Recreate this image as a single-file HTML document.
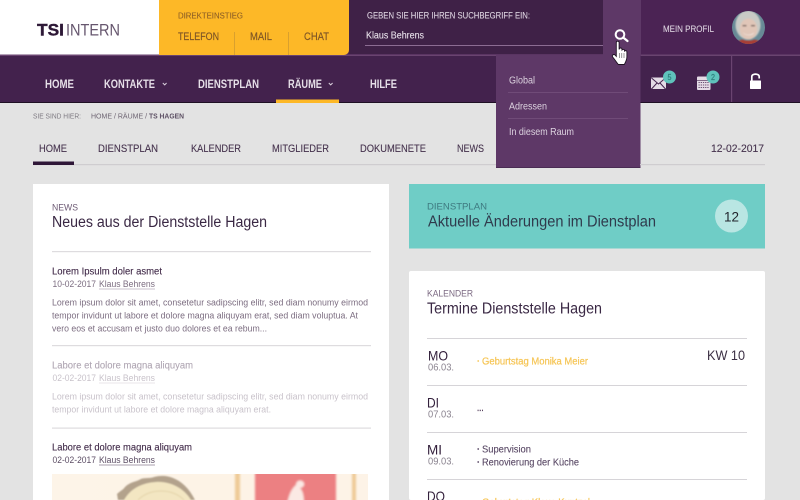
<!DOCTYPE html>
<html lang="de"><head><meta charset="utf-8"><title>TS Intern</title>
<style>
html,body{margin:0;padding:0;width:800px;height:500px;overflow:hidden;background:#e3e3e3}
svg{display:block;position:absolute;left:0;top:0}
text{font-family:"Liberation Sans",sans-serif;white-space:pre}
.nav{font-size:11.5px;font-weight:bold;fill:#e6dfe8}
.tab{font-size:11px;fill:#47344f;stroke:#47344f;stroke-width:.12}
.t{font-size:10.2px;fill:#3f2847;stroke:#3f2847;stroke-width:.1}
.p{font-size:9.6px;fill:#7c6d81}
.h{font-size:15.4px;fill:#3a2844}
.k{font-size:9px;fill:#6d5a74}
.d{font-size:14px;fill:#33203c}
.m{font-size:10.5px;fill:#8b8490}
.dd{font-size:10.2px;fill:#ddd3e0}
.y{font-size:10.7px;fill:#7d5526;stroke:#7d5526;stroke-width:.15}
.e{font-size:10px;fill:#574663;stroke:#574663;stroke-width:.1}
.o{font-size:10px;fill:#f6c658;stroke:#f6c658;stroke-width:.25}
</style></head><body>
<svg width="800" height="500" viewBox="0 0 800 500" xmlns="http://www.w3.org/2000/svg">
<defs>
<linearGradient id="bg" x1="0" x2="1" y1="0" y2="0"><stop offset="0" stop-color="#fdf4e8"/><stop offset=".5" stop-color="#fdf3e6"/><stop offset="1" stop-color="#fdf3e7"/></linearGradient>
<filter id="bl" x="-10%" y="-10%" width="120%" height="120%"><feGaussianBlur stdDeviation="1"/></filter>
<filter id="bl2" x="-10%" y="-10%" width="120%" height="120%"><feGaussianBlur stdDeviation=".8"/></filter>
<clipPath id="av"><circle cx="748.500" cy="27.500" r="16.500"/></clipPath>
<clipPath id="ph"><rect x="52" y="474" width="316" height="26"/></clipPath>
</defs>
<rect width="800" height="500" fill="#e3e3e3"/>
<!-- header -->
<rect width="159" height="55" fill="#fff"/>
<rect x="159" width="641" height="55" fill="#4b2354"/>
<rect y="54.500" width="800" height="1.500" fill="#6a4470"/>
<rect y="56" width="800" height="46" fill="#43224d"/>
<rect y="102" width="800" height="1" fill="#1f1024"/>
<text x="37" y="35.500" font-size="17" font-weight="bold" fill="#2d1836" stroke="#2d1836" stroke-width=".4" textLength="27" lengthAdjust="spacingAndGlyphs">TSI</text>
<text x="66" y="35.500" font-size="17" fill="#66566e" textLength="54" lengthAdjust="spacingAndGlyphs">INTERN</text>
<path d="M159 0H349V50a5 5 0 0 1-5 5H159Z" fill="#fdb827"/>
<text x="178" y="18.500" font-size="8.600" fill="#8d5f26" stroke="#8d5f26" stroke-width=".1" textLength="65" lengthAdjust="spacingAndGlyphs">DIREKTEINSTIEG</text>
<text x="178" y="40" class="y" textLength="41" lengthAdjust="spacingAndGlyphs">TELEFON</text>
<text x="250" y="40" class="y" textLength="22" lengthAdjust="spacingAndGlyphs">MAIL</text>
<text x="304" y="40" class="y" textLength="25" lengthAdjust="spacingAndGlyphs">CHAT</text>
<rect x="234" y="32" width="1" height="23" fill="#d9a02e"/>
<rect x="288" y="32" width="1" height="23" fill="#d9a02e"/>
<!-- search -->
<rect x="349" width="254" height="54" fill="#3f2147"/>
<text x="367" y="18.500" font-size="8.800" fill="#ddd3e0" stroke="#ddd3e0" stroke-width=".1" textLength="163" lengthAdjust="spacingAndGlyphs">GEBEN SIE HIER IHREN SUCHBEGRIFF EIN:</text>
<text x="366" y="38.500" font-size="10.200" fill="#e8e1ea" stroke="#e8e1ea" stroke-width=".1" textLength="58" lengthAdjust="spacingAndGlyphs">Klaus Behrens</text>
<rect x="365" y="45" width="238" height="1" fill="#8c6c93"/>
<!-- dropdown and search button -->
<rect x="603" width="38" height="56" fill="#5e3867"/>
<rect x="496" y="55" width="144.500" height="112" fill="#5e3867"/>
<rect x="496" y="167" width="144.500" height="1" fill="#4a2c54"/>
<text x="509" y="83.500" class="dd" textLength="26" lengthAdjust="spacingAndGlyphs">Global</text>
<rect x="508" y="92" width="120" height="1" fill="#704b78"/>
<text x="509" y="109.500" class="dd" textLength="38" lengthAdjust="spacingAndGlyphs">Adressen</text>
<rect x="508" y="118" width="120" height="1" fill="#704b78"/>
<text x="509" y="135" class="dd" textLength="65" lengthAdjust="spacingAndGlyphs">In diesem Raum</text>
<circle cx="620" cy="34.500" r="4.300" fill="none" stroke="#fff" stroke-width="2"/>
<path d="M623.200 37.500L627.500 41" stroke="#fff" stroke-width="2.200" stroke-linecap="round"/>
<path d="M616.300 42.500c0-1.700 2.800-1.700 2.800 0v7l.2-.7c.5-1.200 2.500-1 2.600.2l.1 1c.6-.9 2.400-.8 2.500.4l.1.7c.7-.8 2.300-.5 2.300.8v5c0 3-1.700 6-2.600 7.600h-6c-1.300-1.600-3.600-5-5.700-7.600-1.100-1.700 1.100-3.200 2.500-1.800l1.200 1.300Z" fill="#fff" stroke="#1c1020" stroke-width=".9"/>
<path d="M619.500 53v5M621.800 53v5M624 53v5" stroke="#555" stroke-width=".6"/>
<!-- profile -->
<text x="663" y="32" font-size="9.200" fill="#ddd3e0" stroke="#ddd3e0" stroke-width=".1" textLength="51" lengthAdjust="spacingAndGlyphs">MEIN PROFIL</text>
<g clip-path="url(#av)">
<rect x="731" y="10" width="35" height="35" fill="#688a96"/>
<g filter="url(#bl2)">
<ellipse cx="748" cy="25" rx="12.500" ry="14.500" fill="#c9cbc6"/>
<ellipse cx="748.500" cy="29" rx="8.800" ry="10.500" fill="#e0c6b8"/>
<path d="M743 32.500c3 3 8 3 11 0-1 3.500-9 3.500-11 0Z" fill="#fbf6f2"/>
<rect x="742.500" y="25" width="4" height="1.300" fill="#6d5a55"/><rect x="751" y="25" width="4" height="1.300" fill="#6d5a55"/>
<path d="M735 46c1-5 5-6 8-6.500 2 1.500 9 1.500 11 0 3 .5 8 1.500 9 6.500Z" fill="#a83d35"/>
</g>
</g>
<!-- nav -->
<text x="45" y="88" class="nav" textLength="29" lengthAdjust="spacingAndGlyphs">HOME</text>
<text x="104" y="88" class="nav" textLength="51" lengthAdjust="spacingAndGlyphs">KONTAKTE</text>
<path d="M162.800 83l1.900 1.900 1.900-1.900" fill="none" stroke="#d9cfdc" stroke-width="1"/>
<text x="198" y="88" class="nav" textLength="61" lengthAdjust="spacingAndGlyphs">DIENSTPLAN</text>
<text x="288" y="88" class="nav" textLength="34" lengthAdjust="spacingAndGlyphs">RÄUME</text>
<path d="M328.800 83l1.900 1.900 1.900-1.900" fill="none" stroke="#d9cfdc" stroke-width="1"/>
<text x="370" y="88" class="nav" textLength="27" lengthAdjust="spacingAndGlyphs">HILFE</text>
<rect x="276" y="99.500" width="63" height="3.500" fill="#fdb827"/>
<!-- nav icons -->
<rect x="651" y="77.500" width="15" height="11.500" rx="1" fill="#e4dbe6"/>
<path d="M651.500 78l7 6 7-6M651.500 89l5.500-6M665.500 89l-5.500-6" fill="none" stroke="#43224d" stroke-width="1"/>
<circle cx="669.500" cy="77" r="6.500" fill="#5fc2bb"/>
<text x="667.500" y="80" font-size="8" fill="#2d7f7c" stroke="#2d7f7c" stroke-width=".2" textLength="4" lengthAdjust="spacingAndGlyphs">5</text>
<rect x="697" y="76.500" width="13.500" height="13.500" rx="1" fill="#e4dbe6"/>
<path d="M697 80.500h13.500" stroke="#43224d" stroke-width=".6"/>
<path d="M698.500 82.500h10.500M698.500 85h10.500M698.500 87.500h10.500" stroke="#6b5273" stroke-width="1" stroke-dasharray="1.300 .9"/>
<circle cx="713" cy="77" r="6.500" fill="#5fc2bb"/>
<text x="711" y="80" font-size="8" fill="#2d7f7c" stroke="#2d7f7c" stroke-width=".2" textLength="4" lengthAdjust="spacingAndGlyphs">2</text>
<rect x="731" y="56" width="1.200" height="46" fill="#6a4470"/>
<rect x="750" y="80.500" width="11" height="8.500" rx=".6" fill="#fff"/>
<path d="M751.800 80.500v-3.700c0-3.600 7.400-3.600 7.400 0v1.700" fill="none" stroke="#fff" stroke-width="1.700"/>
<!-- breadcrumb -->
<text x="33" y="118.500" font-size="7.300" fill="#7e7a82" textLength="48" lengthAdjust="spacingAndGlyphs">SIE SIND HIER:</text>
<text x="91" y="118.500" font-size="7.300" fill="#6d6472" textLength="58" lengthAdjust="spacingAndGlyphs">HOME / RÄUME / </text>
<text x="149" y="118.500" font-size="7.300" font-weight="bold" fill="#5d5064" textLength="35" lengthAdjust="spacingAndGlyphs">TS HAGEN</text>
<!-- tabs -->
<text x="39" y="152" class="tab" textLength="28" lengthAdjust="spacingAndGlyphs">HOME</text>
<text x="98" y="152" class="tab" textLength="60" lengthAdjust="spacingAndGlyphs">DIENSTPLAN</text>
<text x="191" y="152" class="tab" textLength="50" lengthAdjust="spacingAndGlyphs">KALENDER</text>
<text x="272" y="152" class="tab" textLength="57" lengthAdjust="spacingAndGlyphs">MITGLIEDER</text>
<text x="360" y="152" class="tab" textLength="66" lengthAdjust="spacingAndGlyphs">DOKUMENETE</text>
<text x="457" y="152" class="tab" textLength="27" lengthAdjust="spacingAndGlyphs">NEWS</text>
<text x="711" y="152" class="tab" textLength="53" lengthAdjust="spacingAndGlyphs">12-02-2017</text>
<rect x="33" y="164" width="463" height="1.200" fill="#cfcdd0"/>
<rect x="640" y="164" width="125" height="1.200" fill="#cfcdd0"/>
<rect x="33" y="161.500" width="41" height="3.500" fill="#2f1738"/>
<!-- left card -->
<rect x="33" y="184" width="356" height="316" fill="#fff"/>
<text x="52" y="210.500" class="k" textLength="26" lengthAdjust="spacingAndGlyphs">NEWS</text>
<text x="52" y="227" class="h" textLength="215" lengthAdjust="spacingAndGlyphs">Neues aus der Dienststelle Hagen</text>
<rect x="52" y="251" width="319" height="1.200" fill="#dedcdf"/>
<text x="52" y="274.500" class="t" textLength="110" lengthAdjust="spacingAndGlyphs">Lorem Ipsulm doler asmet</text>
<text x="52.500" y="287" class="p" textLength="43.500" lengthAdjust="spacingAndGlyphs">10-02-2017</text>
<text x="99" y="287" class="p" textLength="56" lengthAdjust="spacingAndGlyphs">Klaus Behrens</text>
<rect x="99" y="288.500" width="56" height="1" fill="#c9c0cc"/>
<text x="52" y="305.500" class="p" textLength="316" lengthAdjust="spacingAndGlyphs">Lorem ipsum dolor sit amet, consetetur sadipscing elitr, sed diam nonumy eirmod</text>
<text x="52" y="318.500" class="p" textLength="306" lengthAdjust="spacingAndGlyphs">tempor invidunt ut labore et dolore magna aliquyam erat, sed diam voluptua. At</text>
<text x="52" y="331.500" class="p" textLength="215" lengthAdjust="spacingAndGlyphs">vero eos et accusam et justo duo dolores et ea rebum...</text>
<rect x="52" y="345" width="319" height="1.200" fill="#dedcdf"/>
<g opacity=".42">
<text x="52" y="368.500" class="t" textLength="141" lengthAdjust="spacingAndGlyphs">Labore et dolore magna aliquyam</text>
<text x="52.500" y="381" class="p" textLength="43.500" lengthAdjust="spacingAndGlyphs">02-02-2017</text>
<text x="99" y="381" class="p" textLength="56" lengthAdjust="spacingAndGlyphs">Klaus Behrens</text>
<rect x="99" y="382.500" width="56" height="1" fill="#c9c0cc"/>
<text x="52" y="399.500" class="p" textLength="316" lengthAdjust="spacingAndGlyphs">Lorem ipsum dolor sit amet, consetetur sadipscing elitr, sed diam nonumy eirmod</text>
<text x="52" y="412.500" class="p" textLength="219" lengthAdjust="spacingAndGlyphs">tempor invidunt ut labore et dolore magna aliquyam erat.</text>
</g>
<rect x="52" y="427.500" width="319" height="1.200" fill="#dedcdf"/>
<text x="52" y="450.500" class="t" textLength="140" lengthAdjust="spacingAndGlyphs">Labore et dolore magna aliquyam</text>
<text x="52.500" y="463" font-size="9.600" fill="#5c4d64" textLength="43.500" lengthAdjust="spacingAndGlyphs">02-02-2017</text>
<text x="99" y="463" font-size="9.600" fill="#5c4d64" textLength="56" lengthAdjust="spacingAndGlyphs">Klaus Behrens</text>
<rect x="99" y="464.500" width="56" height="1" fill="#a99fae"/>
<!-- photo -->
<rect x="52" y="474" width="316" height="26" fill="url(#bg)"/>
<g clip-path="url(#ph)">
<g filter="url(#bl)">
<rect x="235" y="470" width="5" height="34" fill="#eeca97"/>
<rect x="352" y="470" width="4" height="34" fill="#eeca97"/>
<rect x="255" y="470" width="81" height="34" fill="#ec8082"/>
<path d="M287 504c2-10 5-16 9-19 0-5 6-6 8-2 1 3-2 5-4 5 3 3 4 8 4 16Z" fill="#fbe9e4"/>
</g>
<g filter="url(#bl2)">
<path d="M117 494c3-3 6-4 8-7 5-5 10-5 14-7 4-3 10-1 15-3 8-2 14-1 19 1 8 3 16 10 22 22H118Z" fill="#b3a28c"/>
<path d="M122 504c6-14 18-21 34-22 16-1 31 8 37 22Z" fill="#f3e6c2"/>
<path d="M138 500c6-6 14-9 23-9s17 3 23 9" fill="none" stroke="#e6d7ad" stroke-width="1.200"/>
</g>
</g>
<!-- teal -->
<rect x="409" y="184" width="356" height="64.500" fill="#6fcdc6"/>
<text x="427" y="209.500" font-size="9" fill="#3e7a80" textLength="60" lengthAdjust="spacingAndGlyphs">DIENSTPLAN</text>
<text x="428" y="226.500" font-size="15.400" fill="#2f3a4c" textLength="228" lengthAdjust="spacingAndGlyphs">Aktuelle Änderungen im Dienstplan</text>
<circle cx="731.500" cy="216" r="16.500" fill="#b9e6e3"/>
<text x="724" y="221.500" font-size="14" fill="#22262e" textLength="15" lengthAdjust="spacingAndGlyphs">12</text>
<!-- calendar -->
<rect x="409" y="271" width="356" height="229" rx="2" fill="#fff"/>
<text x="427" y="296.500" font-size="9" fill="#7b6982" textLength="46" lengthAdjust="spacingAndGlyphs">KALENDER</text>
<text x="427" y="313.500" class="h" textLength="175" lengthAdjust="spacingAndGlyphs">Termine Dienststelle Hagen</text>
<rect x="427" y="338" width="320" height="1" fill="#d6d4d8"/>
<text x="428" y="360.500" class="d" textLength="20" lengthAdjust="spacingAndGlyphs">MO</text>
<text x="428" y="370.500" class="m" textLength="26" lengthAdjust="spacingAndGlyphs">06.03.</text>
<circle cx="478.200" cy="361" r=".9" fill="#f6c658"/>
<text x="482" y="364.500" class="o" textLength="106" lengthAdjust="spacingAndGlyphs">Geburtstag Monika Meier</text>
<text x="707" y="360" font-size="14" fill="#3c3044" textLength="38" lengthAdjust="spacingAndGlyphs">KW 10</text>
<rect x="427" y="385" width="320" height="1" fill="#d6d4d8"/>
<text x="427" y="407.500" class="d" textLength="12" lengthAdjust="spacingAndGlyphs">DI</text>
<text x="428" y="417.500" class="m" textLength="26" lengthAdjust="spacingAndGlyphs">07.03.</text>
<text x="477" y="411" font-size="10" fill="#3a2142" stroke="#3a2142" stroke-width=".2" textLength="6.500" lengthAdjust="spacingAndGlyphs">...</text>
<rect x="427" y="432" width="320" height="1" fill="#d6d4d8"/>
<text x="427" y="454.500" class="d" textLength="15" lengthAdjust="spacingAndGlyphs">MI</text>
<text x="428" y="464.500" class="m" textLength="26" lengthAdjust="spacingAndGlyphs">09.03.</text>
<circle cx="478.200" cy="449" r=".9" fill="#574663"/>
<text x="482" y="452.500" class="e" textLength="49" lengthAdjust="spacingAndGlyphs">Supervision</text>
<circle cx="478.200" cy="462" r=".9" fill="#574663"/>
<text x="482" y="465.500" class="e" textLength="97" lengthAdjust="spacingAndGlyphs">Renovierung der Küche</text>
<rect x="427" y="479" width="320" height="1" fill="#d6d4d8"/>
<text x="427" y="501" class="d" textLength="18" lengthAdjust="spacingAndGlyphs">DO</text>
<circle cx="478.200" cy="502" r=".9" fill="#f6c658"/>
<text x="482" y="505.500" class="o" textLength="108" lengthAdjust="spacingAndGlyphs">Geburtstag Klaus Kuntzel</text>
</svg>
</body></html>
